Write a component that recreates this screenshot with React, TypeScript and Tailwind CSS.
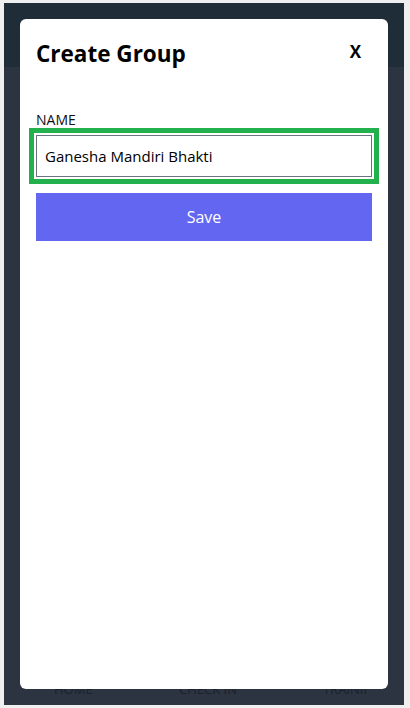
import React from "react";

export default function App() {
  return (
    <div className="w-[410px] h-[708px] bg-[#efefef] pt-[3px] pl-[4px] overflow-hidden" style={{ fontFamily: '"Open Sans", "Noto Sans", sans-serif' }}>
      <div className="relative w-[400px] h-[702px] bg-[#2c3441] flex flex-col">
        <div className="h-[64px] bg-[#1f2d38]" />
        <div className="flex-1" />
        <div className="h-[30px] flex items-start pt-[6px] text-[13px] leading-[16px] text-[#1a212c]">
          <span className="ml-[50px] w-[36px]">HOME</span>
          <span className="ml-[89px]">CHECK IN</span>
          <span className="ml-[86px]">TRAINII</span>
        </div>

        <div className="absolute left-[16px] top-[16px] w-[368px] h-[670px] bg-white rounded-[6px] px-[16px] pt-[20px]">
          <div className="flex items-center justify-between h-[30px]">
            <h1 className="text-[22.5px] font-bold text-black leading-none">Create Group</h1>
            <span className="text-[17px] font-bold text-black mr-[11px] -mt-[4px]">X</span>
          </div>
          <label className="block mt-[44px] text-[14px] text-[#111] leading-none">NAME</label>
          <div className="mt-[8px]">
            <input
              defaultValue="Ganesha Mandiri Bhakti"
              className="w-full h-[42px] border border-[#6b7280] px-[8px] text-[15px] text-black outline outline-[5px] outline-offset-[2px] outline-[#22b14c]"
            />
          </div>
          <button className="mt-[16px] w-full h-[48px] bg-[#6366f1] text-white text-[16px]">Save</button>
        </div>
      </div>
    </div>
  );
}
